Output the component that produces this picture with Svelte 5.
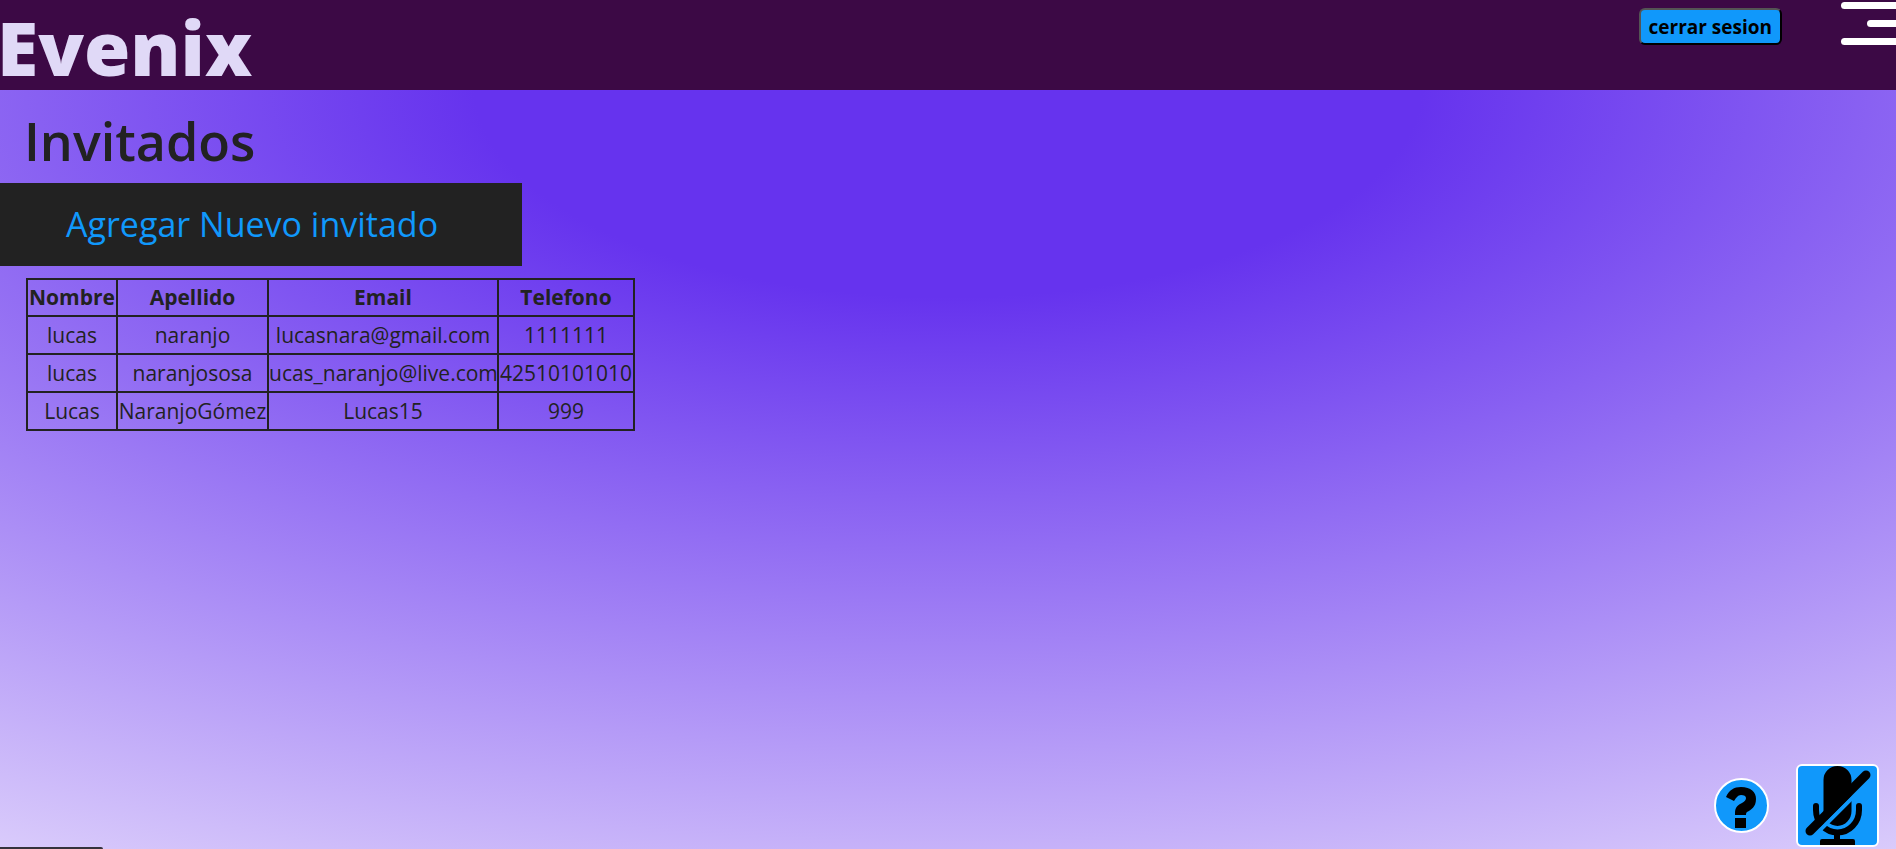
<script>
  const columns = ['Nombre', 'Apellido', 'Email', 'Telefono'];
  const guests = [
    ['lucas', 'naranjo', 'lucasnara@gmail.com', '1111111'],
    ['lucas', 'naranjososa', 'ucas_naranjo@live.com', '42510101010'],
    ['Lucas', 'NaranjoGómez', 'Lucas15', '999'],
  ];
</script>

<div class="page">
  <header>
    <a class="brand" href="#inicio">Evenix</a>
    <div class="actions">
      <button class="logout" type="button">cerrar sesion</button>
      <button class="menu" type="button" aria-label="Menu">
        <span></span><span class="short"></span><span></span>
      </button>
    </div>
  </header>

  <main>
    <h1>Invitados</h1>
    <a class="add" href="#nuevo">Agregar Nuevo invitado</a>
    <table>
      <colgroup><col class="c1" /><col class="c2" /><col class="c3" /><col class="c4" /></colgroup>
      <thead>
        <tr>{#each columns as column}<th scope="col">{column}</th>{/each}</tr>
      </thead>
      <tbody>
        {#each guests as guest}
          <tr>{#each guest as value}<td>{value}</td>{/each}</tr>
        {/each}
      </tbody>
    </table>
  </main>

  <div class="floating">
    <button class="help" type="button" aria-label="Ayuda">
      <svg viewBox="0 0 51 51" aria-hidden="true">
        <path d="M10 17 C13 10 18 7 25 7 C35 7 40 12 40 19 C40 27 35 30 31 32 C30 33 30 34 30 35 H19 V33 C19 27 22 25 26 23 C29 21 30 20 30 18 C30 16 28 15 25 15 C22 15 20 18 18 21 Z" />
        <rect x="19" y="38" width="11" height="10" />
      </svg>
    </button>
    <button class="mic" type="button" aria-label="Microfono">
      <svg viewBox="0 0 79 79" aria-hidden="true">
        <path class="stand" d="M18 40 V44 A21 22 0 0 0 61 44 V40" />
        <path d="M36 66 H42 V73 H55 Q57 73 57 75 V79 H22 V75 Q22 73 24 73 H36 Z" />
        <path d="M25.500 14 A14 14 0 0 1 53.500 14 V45 A14 15 0 0 1 25.500 45 Z" />
        <path class="gap" d="M14 72 L72 14" />
        <path class="slash" d="M12 65 L68 9" />
      </svg>
    </button>
  </div>
  <div class="status"></div>
</div>

<style>
  :global(body) {
    margin: 0;
    font-family: 'Open Sans', 'Segoe UI', sans-serif;
    color: #222;
  }
  .page {
    min-height: 100vh;
    background: radial-gradient(125% 125% at 50% 10%, #63e 20%, #faf6ff 100%);
  }
  header {
    display: flex;
    justify-content: space-between;
    height: 90px;
    background: #3c0945;
  }
  .brand {
    margin-left: -3px;
    font-size: 75px;
    line-height: 94px;
    font-weight: 800;
    color: #e0d9f7;
    text-decoration: none;
  }
  .actions {
    display: flex;
    align-items: flex-start;
    gap: 59px;
  }
  .logout {
    margin-top: 8px;
    height: 37px;
    padding: 0 8px;
    border: 2px outset #000;
    border-radius: 6px;
    background: #1098fb;
    color: #000;
    font: 700 19px 'Open Sans', 'Segoe UI', sans-serif;
  }
  .menu {
    display: flex;
    flex-direction: column;
    align-items: flex-end;
    gap: 11px;
    margin: 0;
    padding: 2px 0 0;
    border: 0;
    background: none;
  }
  .menu span {
    width: 55px;
    height: 7px;
    border-radius: 4px 0 0 4px;
    background: #fff;
  }
  .menu .short {
    width: 29px;
  }
  main {
    display: flex;
    flex-direction: column;
    align-items: flex-start;
  }
  h1 {
    margin: 17px 0 8px 24px;
    font-size: 52px;
    line-height: 68px;
    font-weight: 600;
  }
  .add {
    padding: 0 84px 0 66px;
    background: #222;
    color: #1098fb;
    font-size: 34px;
    line-height: 83px;
    text-decoration: none;
  }
  table {
    margin: 12px 0 0 26px;
    border-collapse: collapse;
    table-layout: fixed;
    width: 609px;
    font-size: 21px;
    line-height: 36px;
    text-align: center;
    white-space: nowrap;
  }
  .c1 { width: 90px; }
  .c2 { width: 151px; }
  .c3 { width: 230px; }
  .c4 { width: 136px; }
  th,
  td {
    padding: 0;
    border: 2px solid #222;
  }
  th {
    line-height: 35px;
  }
  .floating {
    position: fixed;
    right: 17px;
    bottom: 2px;
    display: flex;
    align-items: center;
    gap: 27px;
  }
  .help,
  .mic {
    padding: 0;
    border: 2px solid #fff;
    background: #1098fb;
  }
  .help {
    width: 55px;
    height: 55px;
    border-radius: 50%;
  }
  .mic {
    width: 83px;
    height: 83px;
    border-radius: 6px;
  }
  svg {
    display: block;
    width: 100%;
    height: 100%;
  }
  .stand,
  .slash,
  .gap {
    fill: none;
    stroke: #000;
    stroke-width: 6;
    stroke-linecap: round;
  }
  .slash {
    stroke-width: 9;
  }
  .gap {
    stroke: #1098fb;
    stroke-width: 4;
  }
  .status {
    position: fixed;
    left: 0;
    bottom: 0;
    width: 103px;
    height: 2px;
    border-radius: 0 2px 0 0;
    background: #35323c;
  }
</style>
